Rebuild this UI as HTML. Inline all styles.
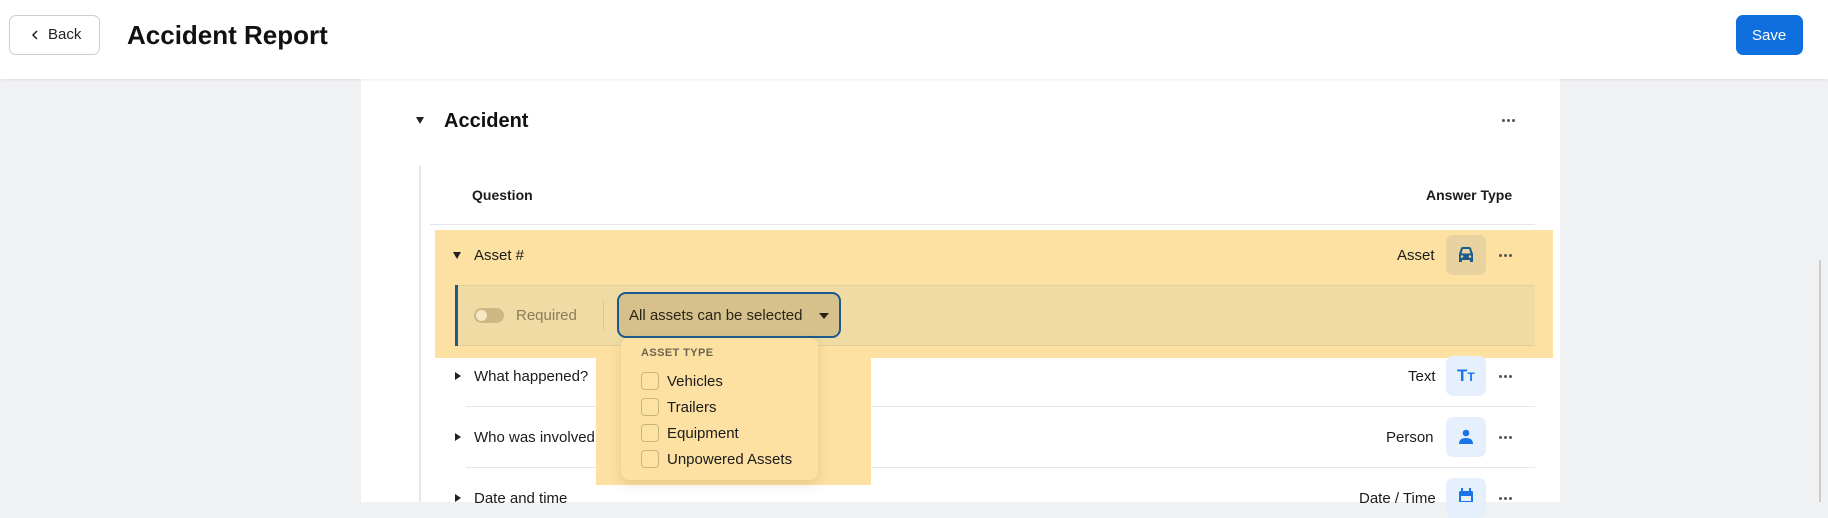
<!DOCTYPE html>
<html><head><meta charset="utf-8"><style>
*{box-sizing:border-box;margin:0;padding:0}
body{width:1828px;height:502px;overflow:hidden;background:#f0f1f3;font-family:"Liberation Sans",sans-serif;color:#1b1b1b;position:relative}
.abs{position:absolute}
.hdr{left:0;top:0;width:1828px;height:79px;background:#fff;box-shadow:0 1px 3px rgba(0,0,0,.08);z-index:2}
.card{left:361px;top:79px;width:1199px;height:423px;background:#fff}
.t{position:absolute;white-space:nowrap;line-height:1}
.dots{position:absolute;width:14px;height:4px}
.dots i{position:absolute;top:0;width:3px;height:3px;border-radius:50%;background:#555}
.ib{position:absolute;left:1446px;width:40px;height:40px;border-radius:7px;background:#e6f0fd}
.cb{position:absolute;left:641px;width:18px;height:18px;border:1px solid #c7b47e;border-radius:4px;background:#fde3a3}
.tri{position:absolute;width:0;height:0}
</style></head><body>
<div class="abs hdr">
  <div class="abs" style="left:9px;top:15px;width:91px;height:40px;border:1px solid #c9ced6;border-radius:7px"></div>
  <svg class="abs" style="left:31px;top:30px" width="8" height="10"><path d="M6 1 L2 5 L6 9" stroke="#222" stroke-width="1.5" fill="none"/></svg>
  <div class="t" style="left:48px;top:27px;font-size:15px;color:#222">Back</div>
  <div class="t" style="left:127px;top:22px;font-size:26px;font-weight:bold;color:#111">Accident Report</div>
  <div class="abs" style="left:1736px;top:15px;width:67px;height:40px;background:#0f6fde;border-radius:7px"></div>
  <div class="t" style="left:1752px;top:28px;font-size:15px;color:#fff">Save</div>
</div>
<div class="abs card"></div>
<div class="abs" style="left:1819px;top:260px;width:2px;height:242px;background:#ccc"></div>
<div class="tri" style="left:416px;top:117px;border-left:4px solid transparent;border-right:4px solid transparent;border-top:7px solid #222"></div>
<div class="t" style="left:444px;top:111px;font-size:20px;font-weight:bold;color:#111">Accident</div>
<div class="dots" style="left:1502px;top:119px"><i style="left:0"></i><i style="left:5px"></i><i style="left:10px"></i></div>
<div class="abs" style="left:419px;top:166px;width:2px;height:336px;background:#e4e6ea"></div>
<div class="t" style="left:472px;top:188px;font-size:14px;font-weight:bold">Question</div>
<div class="t" style="left:1426px;top:188px;font-size:14px;font-weight:bold">Answer Type</div>
<div class="abs" style="left:430px;top:224px;width:1105px;height:1px;background:#e3e6ea"></div>

<!-- highlight -->
<div class="abs" style="left:435px;top:230px;width:1118px;height:128px;background:#fde1a2"></div>
<div class="tri" style="left:453px;top:252px;border-left:4px solid transparent;border-right:4px solid transparent;border-top:7px solid #222"></div>
<div class="t" style="left:474px;top:248px;font-size:15px">Asset #</div>
<div class="t" style="left:1397px;top:248px;font-size:15px">Asset</div>
<div class="ib" style="top:235px;background:#e8d3a0"></div>
<svg class="abs" style="left:1455px;top:244px" width="22" height="22" viewBox="0 0 22 22"><path d="M4 10 L6 4 Q6.5 3 8 3 H14 Q15.5 3 16 4 L18 10 V18 H15 V16 H7 V18 H4 Z" fill="#1a5a8c"/><path d="M6.5 9.5 L7.8 5 H14.2 L15.5 9.5 Z" fill="#e8d3a0"/><circle cx="7" cy="12.5" r="1.3" fill="#e8d3a0"/><circle cx="15" cy="12.5" r="1.3" fill="#e8d3a0"/></svg>
<div class="dots" style="left:1499px;top:254px"><i style="left:0"></i><i style="left:5px"></i><i style="left:10px"></i></div>
<div class="abs" style="left:456px;top:285px;width:1079px;height:61px;background:#f0dba5;border-top:1px solid #e4cf98;border-bottom:1px solid #e4cf98"></div>
<div class="abs" style="left:455px;top:285px;width:3px;height:61px;background:#1a5a8c"></div>
<div class="abs" style="left:474px;top:308px;width:30px;height:15px;border-radius:8px;background:#cdb782"></div>
<div class="abs" style="left:476px;top:310px;width:11px;height:11px;border-radius:50%;background:#f5e8c4"></div>
<div class="t" style="left:516px;top:308px;font-size:15px;color:#8a7b5a">Required</div>
<div class="abs" style="left:603px;top:300px;width:1px;height:30px;background:#dcc791"></div>
<div class="abs" style="left:617px;top:292px;width:224px;height:46px;border:2px solid #1a5a8c;border-radius:9px;background:#d6c18d"></div>
<div class="t" style="left:629px;top:308px;font-size:15px;color:#2a2416">All assets can be selected</div>
<div class="tri" style="left:819px;top:313px;border-left:5px solid transparent;border-right:5px solid transparent;border-top:6px solid #2a2416"></div>

<!-- other rows -->
<div class="abs" style="left:466px;top:406px;width:1069px;height:1px;background:#e6e7eb"></div>
<div class="abs" style="left:466px;top:467px;width:1069px;height:1px;background:#e6e7eb"></div>
<div class="tri" style="left:455px;top:372px;border-top:4px solid transparent;border-bottom:4px solid transparent;border-left:6px solid #222"></div>
<div class="t" style="left:474px;top:369px;font-size:15px">What happened?</div>
<div class="tri" style="left:455px;top:433px;border-top:4px solid transparent;border-bottom:4px solid transparent;border-left:6px solid #222"></div>
<div class="t" style="left:474px;top:430px;font-size:15px">Who was involved</div>
<div class="tri" style="left:455px;top:494px;border-top:4px solid transparent;border-bottom:4px solid transparent;border-left:6px solid #222"></div>
<div class="t" style="left:474px;top:491px;font-size:15px">Date and time</div>
<div class="t" style="left:1408px;top:369px;font-size:15px">Text</div>
<div class="t" style="left:1386px;top:430px;font-size:15px">Person</div>
<div class="t" style="left:1359px;top:491px;font-size:15px">Date / Time</div>
<div class="ib" style="top:356px"></div>
<div class="t" style="left:1457px;top:367px;font-size:17px;font-weight:bold;color:#1a73e8">T<span style="font-size:12px">T</span></div>
<div class="ib" style="top:417px"></div>
<svg class="abs" style="left:1456px;top:427px" width="20" height="20"><circle cx="10" cy="6" r="3.3" fill="#1a73e8"/><path d="M3 17 Q3 11 10 11 Q17 11 17 17 Z" fill="#1a73e8"/></svg>
<div class="ib" style="top:478px"></div>
<svg class="abs" style="left:1457px;top:488px" width="18" height="14"><rect x="2" y="3" width="14" height="12" rx="1.5" fill="#1a73e8"/><rect x="4" y="0" width="2" height="4" fill="#1a73e8"/><rect x="12" y="0" width="2" height="4" fill="#1a73e8"/><rect x="4" y="8" width="10" height="5" fill="#e6f0fd"/></svg>
<div class="dots" style="left:1499px;top:375px"><i style="left:0"></i><i style="left:5px"></i><i style="left:10px"></i></div>
<div class="dots" style="left:1499px;top:436px"><i style="left:0"></i><i style="left:5px"></i><i style="left:10px"></i></div>
<div class="dots" style="left:1499px;top:497px"><i style="left:0"></i><i style="left:5px"></i><i style="left:10px"></i></div>

<!-- dropdown highlight -->
<div class="abs" style="left:596px;top:358px;width:275px;height:127px;background:#fde1a2"></div>
<div class="abs" style="left:621px;top:338px;width:197px;height:142px;background:#fde1a2;border-radius:8px;box-shadow:0 4px 12px rgba(120,90,20,.18)"></div>
<div class="t" style="left:641px;top:348px;font-size:11px;font-weight:bold;color:#6e6550;letter-spacing:.4px">ASSET TYPE</div>
<div class="cb" style="top:372px"></div><div class="t" style="left:667px;top:374px;font-size:15px">Vehicles</div>
<div class="cb" style="top:398px"></div><div class="t" style="left:667px;top:400px;font-size:15px">Trailers</div>
<div class="cb" style="top:424px"></div><div class="t" style="left:667px;top:426px;font-size:15px">Equipment</div>
<div class="cb" style="top:450px"></div><div class="t" style="left:667px;top:452px;font-size:15px">Unpowered Assets</div>
</body></html>
